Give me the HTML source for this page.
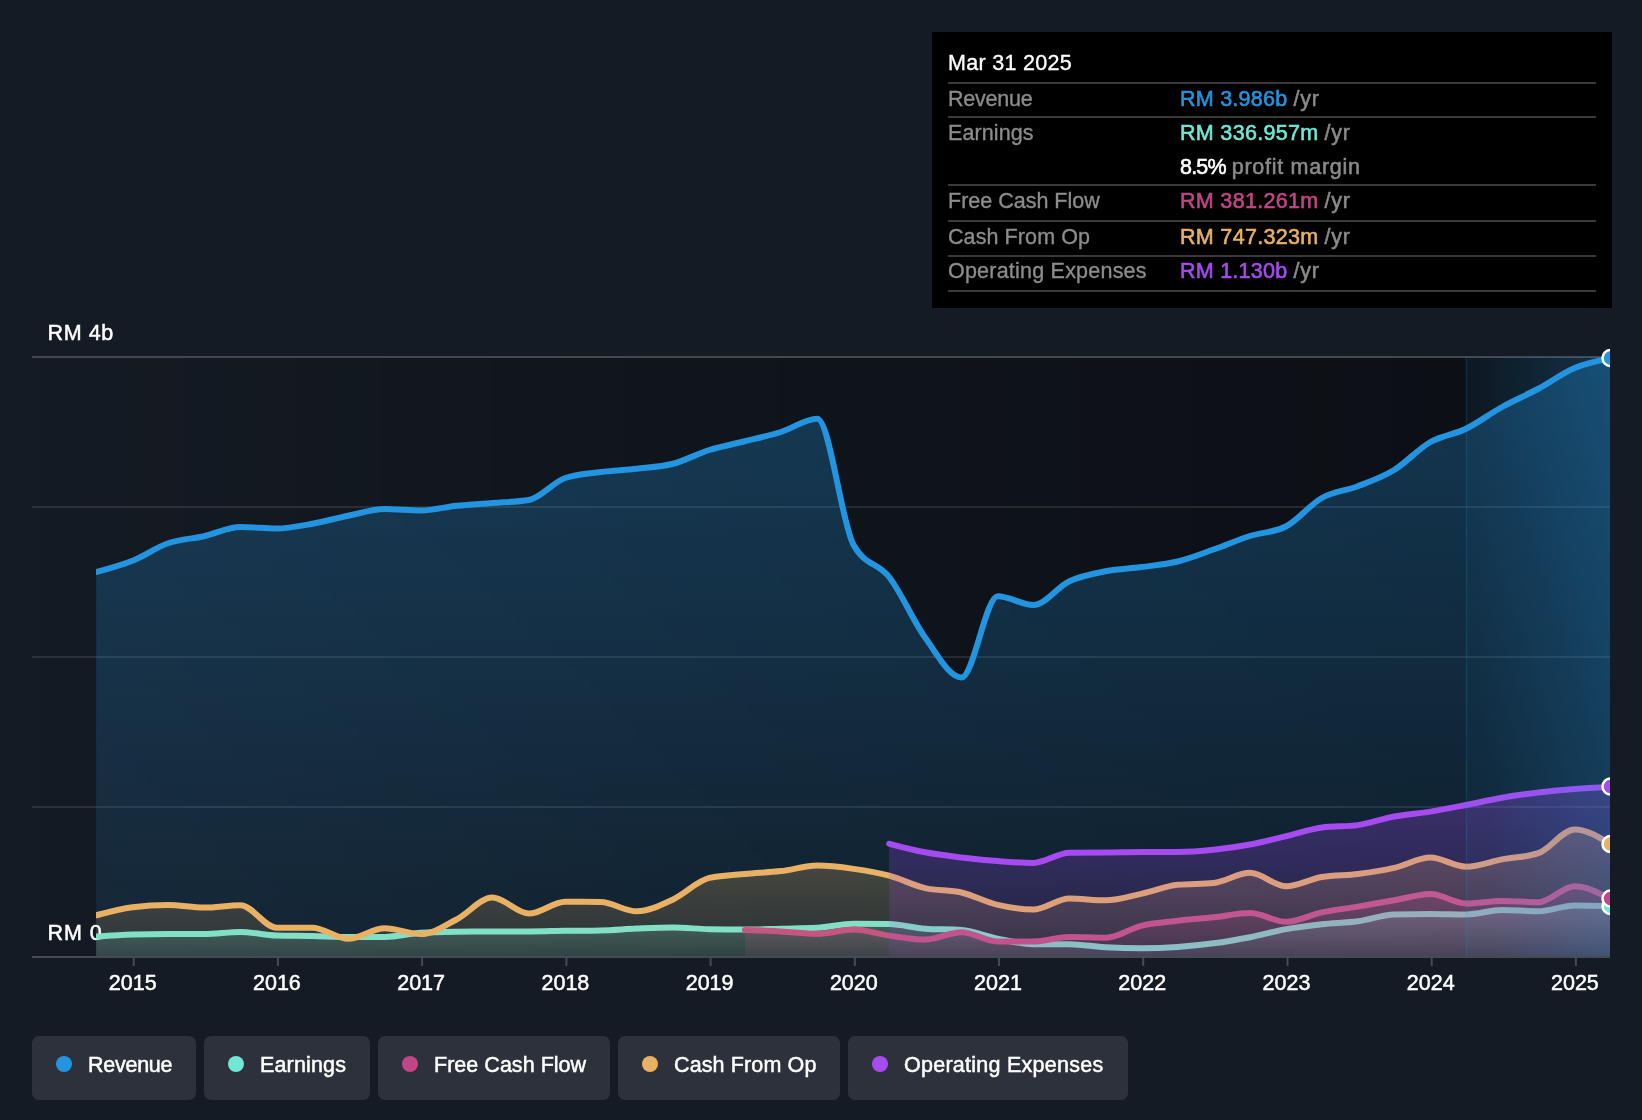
<!DOCTYPE html>
<html lang="en">
<head>
<meta charset="utf-8">
<title>Earnings and Revenue History</title>
<style>
  html, body { margin: 0; padding: 0; }
  body {
    width: 1642px; height: 1120px; overflow: hidden; position: relative;
    background: #151b24;
    font-family: "Liberation Sans", sans-serif;
    font-size: 21.5px; color: #fff;
  }
  svg#chart { position: absolute; left: 0; top: 0; will-change: transform; }
  svg text { font-family: "Liberation Sans", sans-serif; font-size: 21.5px; fill: #fff; }

  /* ---------- tooltip ---------- */
  #tooltip {
    position: absolute; left: 932px; top: 32px; width: 680px; height: 276px;
    background: #000; box-sizing: border-box;
  }
  #tooltip .t { position: absolute; white-space: pre; line-height: 24px; height: 24px; will-change: transform; }
  #tooltip .lbl { left: 16px; color: #8c8c8c; -webkit-text-stroke: 0.35px currentColor; }
  #tooltip .val { left: 247.6px; font-weight: 400; -webkit-text-stroke: 0.6px currentColor; }
  #tooltip .val .u { color: #8a8a8a; -webkit-text-stroke: 0.55px #8a8a8a; }
  #tooltip .sep { position: absolute; left: 16px; width: 648px; height: 2px; background: #3a3a3a; }

  /* ---------- legend ---------- */
  #legend { position: absolute; left: 0; top: 1036px; height: 64px; }
  .lg {
    position: absolute; top: 0; height: 64px; background: #2c313b; border-radius: 7px;
  }
  .lg i { position: absolute; left: 24px; top: 20px; width: 16px; height: 16px; border-radius: 50%; }
  .lg b { will-change: transform; position: absolute; left: 55.8px; top: 17px; line-height: 24px; font-weight: 400; white-space: pre; -webkit-text-stroke: 0.5px #fff; }
</style>
</head>
<body>

<svg id="chart" width="1642" height="1120" viewBox="0 0 1642 1120">
  <defs>
    <clipPath id="zeroclip"><rect x="96" y="890" width="5" height="66"/></clipPath>
    <clipPath id="plotclip"><rect x="96" y="300" width="1514" height="700"/></clipPath>
    <linearGradient id="gDark" x1="0" x2="1" y1="0" y2="0">
      <stop offset="0" stop-color="#000" stop-opacity="0"/>
      <stop offset="0.5" stop-color="#000" stop-opacity="0.23"/>
      <stop offset="1" stop-color="#000" stop-opacity="0.40"/>
    </linearGradient>
    <linearGradient id="gHi" x1="0" x2="1" y1="0.25" y2="0">
      <stop offset="0" stop-color="#2394df" stop-opacity="0.05"/>
      <stop offset="1" stop-color="#2394df" stop-opacity="0.26"/>
    </linearGradient>
    <linearGradient id="gRev" x1="0" x2="0" y1="0" y2="1">
      <stop offset="0" stop-color="#2394df" stop-opacity="0.30"/>
      <stop offset="1" stop-color="#2394df" stop-opacity="0.10"/>
    </linearGradient>
    <linearGradient id="gEarn" x1="0" x2="0" y1="0" y2="1">
      <stop offset="0" stop-color="#71e7d6" stop-opacity="0.30"/>
      <stop offset="1" stop-color="#71e7d6" stop-opacity="0.10"/>
    </linearGradient>
    <linearGradient id="gFcf" x1="0" x2="0" y1="0" y2="1">
      <stop offset="0" stop-color="#c04687" stop-opacity="0.30"/>
      <stop offset="1" stop-color="#c04687" stop-opacity="0.10"/>
    </linearGradient>
    <linearGradient id="gCash" x1="0" x2="0" y1="0" y2="1">
      <stop offset="0" stop-color="#e8b163" stop-opacity="0.30"/>
      <stop offset="1" stop-color="#e8b163" stop-opacity="0.10"/>
    </linearGradient>
    <linearGradient id="gOpex" x1="0" x2="0" y1="0" y2="1">
      <stop offset="0" stop-color="#a64bf0" stop-opacity="0.30"/>
      <stop offset="1" stop-color="#a64bf0" stop-opacity="0.10"/>
    </linearGradient>
  </defs>

  <!-- plot background (darkening to the right) -->
  <rect x="32" y="358" width="1434.5" height="598" fill="url(#gDark)"/>
  <rect x="1466.5" y="358" width="143.5" height="598" fill="#000" fill-opacity="0.40"/>

  <!-- gridlines -->
  <g fill="#ffffff" fill-opacity="0.10">
    <rect x="32" y="506" width="1578" height="2"/>
    <rect x="32" y="656" width="1578" height="2"/>
    <rect x="32" y="806" width="1578" height="2"/>
  </g>
  <rect x="32" y="356" width="1578" height="2" fill="#ffffff" fill-opacity="0.20"/>

  <g clip-path="url(#plotclip)" fill="none" stroke-width="6" stroke-linecap="round" stroke-linejoin="round">
    <!-- Revenue -->
    <path d="M96.15,572.00C108.27,568.81,120.39,565.62,132.50,560.75C144.36,555.99,156.21,547.33,168.07,543.25C180.05,539.12,192.04,538.94,204.02,536.25C216.14,533.53,228.26,527.00,240.37,527.00C252.49,527.00,264.61,528.50,276.72,528.50C288.58,528.50,300.43,525.86,312.29,523.75C324.27,521.62,336.26,518.20,348.24,515.75C360.36,513.28,372.48,509.00,384.59,509.00C396.71,509.00,408.83,510.50,420.94,510.50C432.80,510.50,444.65,507.00,456.51,505.75C468.49,504.49,480.48,503.95,492.46,503.00C504.58,502.04,516.70,502.00,528.81,500.00C540.93,498.00,553.05,482.09,565.16,478.00C577.02,474.00,588.87,473.54,600.73,472.00C612.71,470.44,624.70,470.11,636.68,468.75C648.80,467.37,660.92,466.88,673.03,463.75C685.15,460.62,697.27,453.77,709.38,450.00C721.24,446.31,733.09,444.23,744.95,441.25C756.93,438.23,768.92,435.72,780.90,432.00C793.02,428.24,805.14,418.75,817.25,418.75C829.37,418.75,841.49,523.19,853.60,545.00C865.46,566.33,877.31,561.72,889.17,577.00C901.15,592.45,913.14,620.80,925.12,637.50C937.24,654.38,949.36,677.50,961.47,677.50C973.59,677.50,985.71,596.25,997.82,596.25C1009.68,596.25,1021.53,605.00,1033.39,605.00C1045.37,605.00,1057.36,586.87,1069.34,581.25C1081.46,575.57,1093.58,573.62,1105.69,571.25C1117.81,568.88,1129.93,568.65,1142.04,567.00C1153.90,565.39,1165.75,564.39,1177.61,561.50C1189.59,558.58,1201.58,553.72,1213.56,549.50C1225.68,545.23,1237.80,539.88,1249.91,536.00C1262.03,532.12,1274.15,532.72,1286.26,526.25C1298.12,519.92,1309.97,504.66,1321.83,498.00C1333.81,491.27,1345.80,490.88,1357.78,486.25C1369.90,481.57,1382.02,477.38,1394.13,470.00C1406.25,462.62,1418.37,448.90,1430.48,442.00C1442.34,435.25,1454.19,434.54,1466.05,428.75C1478.03,422.90,1490.02,413.64,1502.00,407.00C1514.12,400.29,1526.24,395.25,1538.35,388.75C1550.47,382.25,1562.59,373.06,1574.70,368.00C1586.56,363.05,1598.41,360.78,1610.27,358.50L1610.27,957.00 L96.15,957.00 Z" fill="url(#gRev)" stroke="none"/>
    <path d="M96.15,572.00C108.27,568.81,120.39,565.62,132.50,560.75C144.36,555.99,156.21,547.33,168.07,543.25C180.05,539.12,192.04,538.94,204.02,536.25C216.14,533.53,228.26,527.00,240.37,527.00C252.49,527.00,264.61,528.50,276.72,528.50C288.58,528.50,300.43,525.86,312.29,523.75C324.27,521.62,336.26,518.20,348.24,515.75C360.36,513.28,372.48,509.00,384.59,509.00C396.71,509.00,408.83,510.50,420.94,510.50C432.80,510.50,444.65,507.00,456.51,505.75C468.49,504.49,480.48,503.95,492.46,503.00C504.58,502.04,516.70,502.00,528.81,500.00C540.93,498.00,553.05,482.09,565.16,478.00C577.02,474.00,588.87,473.54,600.73,472.00C612.71,470.44,624.70,470.11,636.68,468.75C648.80,467.37,660.92,466.88,673.03,463.75C685.15,460.62,697.27,453.77,709.38,450.00C721.24,446.31,733.09,444.23,744.95,441.25C756.93,438.23,768.92,435.72,780.90,432.00C793.02,428.24,805.14,418.75,817.25,418.75C829.37,418.75,841.49,523.19,853.60,545.00C865.46,566.33,877.31,561.72,889.17,577.00C901.15,592.45,913.14,620.80,925.12,637.50C937.24,654.38,949.36,677.50,961.47,677.50C973.59,677.50,985.71,596.25,997.82,596.25C1009.68,596.25,1021.53,605.00,1033.39,605.00C1045.37,605.00,1057.36,586.87,1069.34,581.25C1081.46,575.57,1093.58,573.62,1105.69,571.25C1117.81,568.88,1129.93,568.65,1142.04,567.00C1153.90,565.39,1165.75,564.39,1177.61,561.50C1189.59,558.58,1201.58,553.72,1213.56,549.50C1225.68,545.23,1237.80,539.88,1249.91,536.00C1262.03,532.12,1274.15,532.72,1286.26,526.25C1298.12,519.92,1309.97,504.66,1321.83,498.00C1333.81,491.27,1345.80,490.88,1357.78,486.25C1369.90,481.57,1382.02,477.38,1394.13,470.00C1406.25,462.62,1418.37,448.90,1430.48,442.00C1442.34,435.25,1454.19,434.54,1466.05,428.75C1478.03,422.90,1490.02,413.64,1502.00,407.00C1514.12,400.29,1526.24,395.25,1538.35,388.75C1550.47,382.25,1562.59,373.06,1574.70,368.00C1586.56,363.05,1598.41,360.78,1610.27,358.50" stroke="#2394df"/>
    <!-- Earnings -->
    <path d="M96.15,936.80C108.27,935.87,120.39,934.94,132.50,934.60C144.36,934.27,156.21,934.10,168.07,934.10C180.05,934.10,192.04,934.10,204.02,934.10C216.14,934.10,228.26,931.90,240.37,931.90C252.49,931.90,264.61,935.16,276.72,935.50C288.58,935.83,300.43,935.75,312.29,936.00C324.27,936.25,336.26,937.00,348.24,937.00C360.36,937.00,372.48,937.00,384.59,937.00C396.71,937.00,408.83,933.55,420.94,932.80C432.80,932.07,444.65,931.90,456.51,931.70C468.49,931.50,480.48,931.40,492.46,931.40C504.58,931.40,516.70,931.40,528.81,931.40C540.93,931.40,553.05,930.97,565.16,930.80C577.02,930.64,588.87,930.67,600.73,930.40C612.71,930.13,624.70,929.08,636.68,928.60C648.80,928.11,660.92,927.50,673.03,927.50C685.15,927.50,697.27,928.93,709.38,929.20C721.24,929.47,733.09,929.60,744.95,929.60C756.93,929.60,768.92,929.00,780.90,928.70C793.02,928.40,805.14,928.40,817.25,927.80C829.37,927.20,841.49,923.70,853.60,923.70C865.46,923.70,877.31,923.83,889.17,924.10C901.15,924.37,913.14,927.84,925.12,928.70C937.24,929.57,949.36,929.13,961.47,930.00C973.59,930.87,985.71,936.32,997.82,938.70C1009.68,941.03,1021.53,944.20,1033.39,944.20C1045.37,944.20,1057.36,944.20,1069.34,944.20C1081.46,944.20,1093.58,946.70,1105.69,947.30C1117.81,947.90,1129.93,948.20,1142.04,948.20C1153.90,948.20,1165.75,947.71,1177.61,946.90C1189.59,946.08,1201.58,944.90,1213.56,943.30C1225.68,941.68,1237.80,939.57,1249.91,937.20C1262.03,934.83,1274.15,931.28,1286.26,929.10C1298.12,926.97,1309.97,925.50,1321.83,924.20C1333.81,922.89,1345.80,922.92,1357.78,921.30C1369.90,919.66,1382.02,914.73,1394.13,914.40C1406.25,914.07,1418.37,913.90,1430.48,913.90C1442.34,913.90,1454.19,914.40,1466.05,914.40C1478.03,914.40,1490.02,910.00,1502.00,910.00C1514.12,910.00,1526.24,911.20,1538.35,911.20C1550.47,911.20,1562.59,905.40,1574.70,905.40C1586.56,905.40,1598.41,905.70,1610.27,906.00L1610.27,957.00 L96.15,957.00 Z" fill="url(#gEarn)" stroke="none"/>
    <path d="M96.15,936.80C108.27,935.87,120.39,934.94,132.50,934.60C144.36,934.27,156.21,934.10,168.07,934.10C180.05,934.10,192.04,934.10,204.02,934.10C216.14,934.10,228.26,931.90,240.37,931.90C252.49,931.90,264.61,935.16,276.72,935.50C288.58,935.83,300.43,935.75,312.29,936.00C324.27,936.25,336.26,937.00,348.24,937.00C360.36,937.00,372.48,937.00,384.59,937.00C396.71,937.00,408.83,933.55,420.94,932.80C432.80,932.07,444.65,931.90,456.51,931.70C468.49,931.50,480.48,931.40,492.46,931.40C504.58,931.40,516.70,931.40,528.81,931.40C540.93,931.40,553.05,930.97,565.16,930.80C577.02,930.64,588.87,930.67,600.73,930.40C612.71,930.13,624.70,929.08,636.68,928.60C648.80,928.11,660.92,927.50,673.03,927.50C685.15,927.50,697.27,928.93,709.38,929.20C721.24,929.47,733.09,929.60,744.95,929.60C756.93,929.60,768.92,929.00,780.90,928.70C793.02,928.40,805.14,928.40,817.25,927.80C829.37,927.20,841.49,923.70,853.60,923.70C865.46,923.70,877.31,923.83,889.17,924.10C901.15,924.37,913.14,927.84,925.12,928.70C937.24,929.57,949.36,929.13,961.47,930.00C973.59,930.87,985.71,936.32,997.82,938.70C1009.68,941.03,1021.53,944.20,1033.39,944.20C1045.37,944.20,1057.36,944.20,1069.34,944.20C1081.46,944.20,1093.58,946.70,1105.69,947.30C1117.81,947.90,1129.93,948.20,1142.04,948.20C1153.90,948.20,1165.75,947.71,1177.61,946.90C1189.59,946.08,1201.58,944.90,1213.56,943.30C1225.68,941.68,1237.80,939.57,1249.91,937.20C1262.03,934.83,1274.15,931.28,1286.26,929.10C1298.12,926.97,1309.97,925.50,1321.83,924.20C1333.81,922.89,1345.80,922.92,1357.78,921.30C1369.90,919.66,1382.02,914.73,1394.13,914.40C1406.25,914.07,1418.37,913.90,1430.48,913.90C1442.34,913.90,1454.19,914.40,1466.05,914.40C1478.03,914.40,1490.02,910.00,1502.00,910.00C1514.12,910.00,1526.24,911.20,1538.35,911.20C1550.47,911.20,1562.59,905.40,1574.70,905.40C1586.56,905.40,1598.41,905.70,1610.27,906.00" stroke="#71e7d6"/>
    <!-- Free cash flow -->
    <path d="M744.95,929.90C756.93,930.33,768.92,930.76,780.90,931.40C793.02,932.05,805.14,933.80,817.25,933.80C829.37,933.80,841.49,929.60,853.60,929.60C865.46,929.60,877.31,933.94,889.17,935.60C901.15,937.28,913.14,939.60,925.12,939.60C937.24,939.60,949.36,932.30,961.47,932.30C973.59,932.30,985.71,941.50,997.82,941.50C1009.68,941.50,1021.53,941.50,1033.39,941.50C1045.37,941.50,1057.36,936.90,1069.34,936.90C1081.46,936.90,1093.58,937.80,1105.69,937.80C1117.81,937.80,1129.93,928.44,1142.04,925.60C1153.90,922.82,1165.75,922.18,1177.61,920.80C1189.59,919.41,1201.58,918.59,1213.56,917.30C1225.68,915.99,1237.80,913.00,1249.91,913.00C1262.03,913.00,1274.15,921.80,1286.26,921.80C1298.12,921.80,1309.97,914.93,1321.83,912.40C1333.81,909.85,1345.80,908.60,1357.78,906.60C1369.90,904.57,1382.02,902.40,1394.13,900.30C1406.25,898.20,1418.37,894.00,1430.48,894.00C1442.34,894.00,1454.19,903.40,1466.05,903.40C1478.03,903.40,1490.02,901.00,1502.00,901.00C1514.12,901.00,1526.24,902.20,1538.35,902.20C1550.47,902.20,1562.59,886.30,1574.70,886.30C1586.56,886.30,1598.41,892.65,1610.27,899.00L1610.27,957.00 L744.95,957.00 Z" fill="url(#gFcf)" stroke="none"/>
    <path d="M744.95,929.90C756.93,930.33,768.92,930.76,780.90,931.40C793.02,932.05,805.14,933.80,817.25,933.80C829.37,933.80,841.49,929.60,853.60,929.60C865.46,929.60,877.31,933.94,889.17,935.60C901.15,937.28,913.14,939.60,925.12,939.60C937.24,939.60,949.36,932.30,961.47,932.30C973.59,932.30,985.71,941.50,997.82,941.50C1009.68,941.50,1021.53,941.50,1033.39,941.50C1045.37,941.50,1057.36,936.90,1069.34,936.90C1081.46,936.90,1093.58,937.80,1105.69,937.80C1117.81,937.80,1129.93,928.44,1142.04,925.60C1153.90,922.82,1165.75,922.18,1177.61,920.80C1189.59,919.41,1201.58,918.59,1213.56,917.30C1225.68,915.99,1237.80,913.00,1249.91,913.00C1262.03,913.00,1274.15,921.80,1286.26,921.80C1298.12,921.80,1309.97,914.93,1321.83,912.40C1333.81,909.85,1345.80,908.60,1357.78,906.60C1369.90,904.57,1382.02,902.40,1394.13,900.30C1406.25,898.20,1418.37,894.00,1430.48,894.00C1442.34,894.00,1454.19,903.40,1466.05,903.40C1478.03,903.40,1490.02,901.00,1502.00,901.00C1514.12,901.00,1526.24,902.20,1538.35,902.20C1550.47,902.20,1562.59,886.30,1574.70,886.30C1586.56,886.30,1598.41,892.65,1610.27,899.00" stroke="#c04687"/>
    <!-- Cash from op -->
    <path d="M96.15,915.30C108.27,912.03,120.39,908.77,132.50,907.20C144.36,905.67,156.21,904.90,168.07,904.90C180.05,904.90,192.04,907.60,204.02,907.60C216.14,907.60,228.26,905.20,240.37,905.20C252.49,905.20,264.61,927.70,276.72,927.70C288.58,927.70,300.43,927.70,312.29,927.70C324.27,927.70,336.26,938.70,348.24,938.70C360.36,938.70,372.48,928.20,384.59,928.20C396.71,928.20,408.83,934.10,420.94,934.10C432.80,934.10,444.65,925.54,456.51,919.50C468.49,913.40,480.48,897.60,492.46,897.60C504.58,897.60,516.70,913.60,528.81,913.60C540.93,913.60,553.05,901.80,565.16,901.80C577.02,901.80,588.87,901.90,600.73,902.10C612.71,902.30,624.70,911.30,636.68,911.30C648.80,911.30,660.92,904.97,673.03,899.40C685.15,893.83,697.27,880.63,709.38,877.90C721.24,875.23,733.09,875.03,744.95,873.90C756.93,872.76,768.92,872.47,780.90,871.10C793.02,869.71,805.14,865.60,817.25,865.60C829.37,865.60,841.49,867.18,853.60,868.90C865.46,870.58,877.31,872.53,889.17,875.70C901.15,878.91,913.14,885.30,925.12,888.10C937.24,890.93,949.36,889.70,961.47,892.50C973.59,895.30,985.71,902.06,997.82,904.90C1009.68,907.67,1021.53,909.50,1033.39,909.50C1045.37,909.50,1057.36,898.50,1069.34,898.50C1081.46,898.50,1093.58,900.30,1105.69,900.30C1117.81,900.30,1129.93,896.22,1142.04,893.60C1153.90,891.04,1165.75,885.99,1177.61,884.80C1189.59,883.60,1201.58,884.20,1213.56,883.00C1225.68,881.79,1237.80,872.80,1249.91,872.80C1262.03,872.80,1274.15,886.30,1286.26,886.30C1298.12,886.30,1309.97,878.98,1321.83,877.00C1333.81,875.00,1345.80,875.50,1357.78,874.00C1369.90,872.48,1382.02,870.63,1394.13,867.90C1406.25,865.17,1418.37,857.60,1430.48,857.60C1442.34,857.60,1454.19,866.70,1466.05,866.70C1478.03,866.70,1490.02,861.64,1502.00,859.40C1514.12,857.14,1526.24,857.33,1538.35,853.20C1550.47,849.07,1562.59,829.50,1574.70,829.50C1586.56,829.50,1598.41,836.75,1610.27,844.00L1610.27,957.00 L96.15,957.00 Z" fill="url(#gCash)" stroke="none"/>
    <path d="M96.15,915.30C108.27,912.03,120.39,908.77,132.50,907.20C144.36,905.67,156.21,904.90,168.07,904.90C180.05,904.90,192.04,907.60,204.02,907.60C216.14,907.60,228.26,905.20,240.37,905.20C252.49,905.20,264.61,927.70,276.72,927.70C288.58,927.70,300.43,927.70,312.29,927.70C324.27,927.70,336.26,938.70,348.24,938.70C360.36,938.70,372.48,928.20,384.59,928.20C396.71,928.20,408.83,934.10,420.94,934.10C432.80,934.10,444.65,925.54,456.51,919.50C468.49,913.40,480.48,897.60,492.46,897.60C504.58,897.60,516.70,913.60,528.81,913.60C540.93,913.60,553.05,901.80,565.16,901.80C577.02,901.80,588.87,901.90,600.73,902.10C612.71,902.30,624.70,911.30,636.68,911.30C648.80,911.30,660.92,904.97,673.03,899.40C685.15,893.83,697.27,880.63,709.38,877.90C721.24,875.23,733.09,875.03,744.95,873.90C756.93,872.76,768.92,872.47,780.90,871.10C793.02,869.71,805.14,865.60,817.25,865.60C829.37,865.60,841.49,867.18,853.60,868.90C865.46,870.58,877.31,872.53,889.17,875.70C901.15,878.91,913.14,885.30,925.12,888.10C937.24,890.93,949.36,889.70,961.47,892.50C973.59,895.30,985.71,902.06,997.82,904.90C1009.68,907.67,1021.53,909.50,1033.39,909.50C1045.37,909.50,1057.36,898.50,1069.34,898.50C1081.46,898.50,1093.58,900.30,1105.69,900.30C1117.81,900.30,1129.93,896.22,1142.04,893.60C1153.90,891.04,1165.75,885.99,1177.61,884.80C1189.59,883.60,1201.58,884.20,1213.56,883.00C1225.68,881.79,1237.80,872.80,1249.91,872.80C1262.03,872.80,1274.15,886.30,1286.26,886.30C1298.12,886.30,1309.97,878.98,1321.83,877.00C1333.81,875.00,1345.80,875.50,1357.78,874.00C1369.90,872.48,1382.02,870.63,1394.13,867.90C1406.25,865.17,1418.37,857.60,1430.48,857.60C1442.34,857.60,1454.19,866.70,1466.05,866.70C1478.03,866.70,1490.02,861.64,1502.00,859.40C1514.12,857.14,1526.24,857.33,1538.35,853.20C1550.47,849.07,1562.59,829.50,1574.70,829.50C1586.56,829.50,1598.41,836.75,1610.27,844.00" stroke="#e8b163"/>
    <!-- Opex -->
    <path d="M889.17,843.70C901.15,846.85,913.14,850.01,925.12,852.30C937.24,854.62,949.36,856.03,961.47,857.50C973.59,858.97,985.71,860.20,997.82,861.10C1009.68,861.98,1021.53,862.90,1033.39,862.90C1045.37,862.90,1057.36,853.00,1069.34,852.80C1081.46,852.60,1093.58,852.65,1105.69,852.50C1117.81,852.35,1129.93,851.90,1142.04,851.90C1153.90,851.90,1165.75,851.90,1177.61,851.90C1189.59,851.90,1201.58,850.92,1213.56,849.70C1225.68,848.47,1237.80,846.77,1249.91,844.50C1262.03,842.23,1274.15,838.97,1286.26,836.10C1298.12,833.30,1309.97,829.08,1321.83,827.50C1333.81,825.90,1345.80,826.70,1357.78,825.10C1369.90,823.48,1382.02,818.75,1394.13,816.50C1406.25,814.25,1418.37,813.54,1430.48,811.60C1442.34,809.70,1454.19,807.30,1466.05,805.00C1478.03,802.67,1490.02,799.78,1502.00,797.70C1514.12,795.60,1526.24,793.97,1538.35,792.50C1550.47,791.03,1562.59,789.82,1574.70,788.90C1586.56,788.00,1598.41,787.50,1610.27,787.00L1610.27,957.00 L889.17,957.00 Z" fill="url(#gOpex)" stroke="none"/>
    <path d="M889.17,843.70C901.15,846.85,913.14,850.01,925.12,852.30C937.24,854.62,949.36,856.03,961.47,857.50C973.59,858.97,985.71,860.20,997.82,861.10C1009.68,861.98,1021.53,862.90,1033.39,862.90C1045.37,862.90,1057.36,853.00,1069.34,852.80C1081.46,852.60,1093.58,852.65,1105.69,852.50C1117.81,852.35,1129.93,851.90,1142.04,851.90C1153.90,851.90,1165.75,851.90,1177.61,851.90C1189.59,851.90,1201.58,850.92,1213.56,849.70C1225.68,848.47,1237.80,846.77,1249.91,844.50C1262.03,842.23,1274.15,838.97,1286.26,836.10C1298.12,833.30,1309.97,829.08,1321.83,827.50C1333.81,825.90,1345.80,826.70,1357.78,825.10C1369.90,823.48,1382.02,818.75,1394.13,816.50C1406.25,814.25,1418.37,813.54,1430.48,811.60C1442.34,809.70,1454.19,807.30,1466.05,805.00C1478.03,802.67,1490.02,799.78,1502.00,797.70C1514.12,795.60,1526.24,793.97,1538.35,792.50C1550.47,791.03,1562.59,789.82,1574.70,788.90C1586.56,788.00,1598.41,787.50,1610.27,787.00" stroke="#a64bf0"/>

    <!-- highlighted last period -->
    <rect x="1466.5" y="357" width="143.5" height="600" fill="url(#gHi)" stroke="none"/>
    <line x1="1466.5" x2="1466.5" y1="357" y2="957" stroke="#2394df" stroke-opacity="0.18" stroke-width="1.5"/>

    <!-- end markers -->
    <g stroke="#fff" stroke-width="2.5">
      <circle cx="1610.5" cy="906" r="8" fill="#71e7d6"/>
      <circle cx="1610.5" cy="898.5" r="8" fill="#c04687"/>
      <circle cx="1610.5" cy="844" r="8" fill="#e8b163"/>
      <circle cx="1610.5" cy="786.5" r="8" fill="#a64bf0"/>
      <circle cx="1610.5" cy="358" r="8" fill="#2394df"/>
    </g>
  </g>

  <!-- y labels (drawn above fills, but the series lines pass over the "0") -->
  <g stroke="#fff" stroke-width="0.5">
    <text x="47.6" y="340" letter-spacing="0.55">RM 4b</text>
    <text x="47.6" y="940" letter-spacing="0.9">RM 0</text>
  </g>
  <g clip-path="url(#zeroclip)" fill="none" stroke-width="6">
    <path d="M96.15,936.80C108.27,935.87,120.39,934.94,132.50,934.60C144.36,934.27,156.21,934.10,168.07,934.10C180.05,934.10,192.04,934.10,204.02,934.10C216.14,934.10,228.26,931.90,240.37,931.90C252.49,931.90,264.61,935.16,276.72,935.50C288.58,935.83,300.43,935.75,312.29,936.00C324.27,936.25,336.26,937.00,348.24,937.00C360.36,937.00,372.48,937.00,384.59,937.00C396.71,937.00,408.83,933.55,420.94,932.80C432.80,932.07,444.65,931.90,456.51,931.70C468.49,931.50,480.48,931.40,492.46,931.40C504.58,931.40,516.70,931.40,528.81,931.40C540.93,931.40,553.05,930.97,565.16,930.80C577.02,930.64,588.87,930.67,600.73,930.40C612.71,930.13,624.70,929.08,636.68,928.60C648.80,928.11,660.92,927.50,673.03,927.50C685.15,927.50,697.27,928.93,709.38,929.20C721.24,929.47,733.09,929.60,744.95,929.60C756.93,929.60,768.92,929.00,780.90,928.70C793.02,928.40,805.14,928.40,817.25,927.80C829.37,927.20,841.49,923.70,853.60,923.70C865.46,923.70,877.31,923.83,889.17,924.10C901.15,924.37,913.14,927.84,925.12,928.70C937.24,929.57,949.36,929.13,961.47,930.00C973.59,930.87,985.71,936.32,997.82,938.70C1009.68,941.03,1021.53,944.20,1033.39,944.20C1045.37,944.20,1057.36,944.20,1069.34,944.20C1081.46,944.20,1093.58,946.70,1105.69,947.30C1117.81,947.90,1129.93,948.20,1142.04,948.20C1153.90,948.20,1165.75,947.71,1177.61,946.90C1189.59,946.08,1201.58,944.90,1213.56,943.30C1225.68,941.68,1237.80,939.57,1249.91,937.20C1262.03,934.83,1274.15,931.28,1286.26,929.10C1298.12,926.97,1309.97,925.50,1321.83,924.20C1333.81,922.89,1345.80,922.92,1357.78,921.30C1369.90,919.66,1382.02,914.73,1394.13,914.40C1406.25,914.07,1418.37,913.90,1430.48,913.90C1442.34,913.90,1454.19,914.40,1466.05,914.40C1478.03,914.40,1490.02,910.00,1502.00,910.00C1514.12,910.00,1526.24,911.20,1538.35,911.20C1550.47,911.20,1562.59,905.40,1574.70,905.40C1586.56,905.40,1598.41,905.70,1610.27,906.00" stroke="#80e0c7"/>
    <path d="M96.15,915.30C108.27,912.03,120.39,908.77,132.50,907.20C144.36,905.67,156.21,904.90,168.07,904.90C180.05,904.90,192.04,907.60,204.02,907.60C216.14,907.60,228.26,905.20,240.37,905.20C252.49,905.20,264.61,927.70,276.72,927.70C288.58,927.70,300.43,927.70,312.29,927.70C324.27,927.70,336.26,938.70,348.24,938.70C360.36,938.70,372.48,928.20,384.59,928.20C396.71,928.20,408.83,934.10,420.94,934.10C432.80,934.10,444.65,925.54,456.51,919.50C468.49,913.40,480.48,897.60,492.46,897.60C504.58,897.60,516.70,913.60,528.81,913.60C540.93,913.60,553.05,901.80,565.16,901.80C577.02,901.80,588.87,901.90,600.73,902.10C612.71,902.30,624.70,911.30,636.68,911.30C648.80,911.30,660.92,904.97,673.03,899.40C685.15,893.83,697.27,880.63,709.38,877.90C721.24,875.23,733.09,875.03,744.95,873.90C756.93,872.76,768.92,872.47,780.90,871.10C793.02,869.71,805.14,865.60,817.25,865.60C829.37,865.60,841.49,867.18,853.60,868.90C865.46,870.58,877.31,872.53,889.17,875.70C901.15,878.91,913.14,885.30,925.12,888.10C937.24,890.93,949.36,889.70,961.47,892.50C973.59,895.30,985.71,902.06,997.82,904.90C1009.68,907.67,1021.53,909.50,1033.39,909.50C1045.37,909.50,1057.36,898.50,1069.34,898.50C1081.46,898.50,1093.58,900.30,1105.69,900.30C1117.81,900.30,1129.93,896.22,1142.04,893.60C1153.90,891.04,1165.75,885.99,1177.61,884.80C1189.59,883.60,1201.58,884.20,1213.56,883.00C1225.68,881.79,1237.80,872.80,1249.91,872.80C1262.03,872.80,1274.15,886.30,1286.26,886.30C1298.12,886.30,1309.97,878.98,1321.83,877.00C1333.81,875.00,1345.80,875.50,1357.78,874.00C1369.90,872.48,1382.02,870.63,1394.13,867.90C1406.25,865.17,1418.37,857.60,1430.48,857.60C1442.34,857.60,1454.19,866.70,1466.05,866.70C1478.03,866.70,1490.02,861.64,1502.00,859.40C1514.12,857.14,1526.24,857.33,1538.35,853.20C1550.47,849.07,1562.59,829.50,1574.70,829.50C1586.56,829.50,1598.41,836.75,1610.27,844.00" stroke="#e8b163"/>
  </g>

  <!-- x axis -->
  <rect x="32" y="956" width="1578" height="2" fill="#464b52"/>
  <g fill="#464b52">
    <rect x="132.7" y="958" width="2" height="8"/>
    <rect x="276.9" y="958" width="2" height="8"/>
    <rect x="421.1" y="958" width="2" height="8"/>
    <rect x="565.4" y="958" width="2" height="8"/>
    <rect x="709.6" y="958" width="2" height="8"/>
    <rect x="853.8" y="958" width="2" height="8"/>
    <rect x="998.0" y="958" width="2" height="8"/>
    <rect x="1142.2" y="958" width="2" height="8"/>
    <rect x="1286.5" y="958" width="2" height="8"/>
    <rect x="1430.7" y="958" width="2" height="8"/>
    <rect x="1574.9" y="958" width="2" height="8"/>
  </g>
  <g text-anchor="middle" stroke="#fff" stroke-width="0.5">
    <text x="132.7" y="990">2015</text>
    <text x="276.9" y="990">2016</text>
    <text x="421.1" y="990">2017</text>
    <text x="565.4" y="990">2018</text>
    <text x="709.6" y="990">2019</text>
    <text x="853.8" y="990">2020</text>
    <text x="998.0" y="990">2021</text>
    <text x="1142.2" y="990">2022</text>
    <text x="1286.5" y="990">2023</text>
    <text x="1430.7" y="990">2024</text>
    <text x="1574.9" y="990">2025</text>
  </g>
</svg>

<div id="tooltip">
  <div class="t lbl" style="top:18.6px;letter-spacing:0.30px;color:#fff">Mar 31 2025</div>
  <div class="sep" style="top:50px"></div>
  <div class="t lbl" style="top:54.5px;letter-spacing:-0.23px">Revenue</div>
  <div class="t val" style="top:54.5px;color:#2394df"><span class="v" style="letter-spacing:0.25px">RM 3.986b</span> <span class="u" style="letter-spacing:0.80px">/yr</span></div>
  <div class="sep" style="top:84px"></div>
  <div class="t lbl" style="top:88.5px;letter-spacing:0.09px">Earnings</div>
  <div class="t val" style="top:88.5px;color:#71e7d6"><span class="v" style="letter-spacing:0.32px">RM 336.957m</span> <span class="u" style="letter-spacing:0.80px">/yr</span></div>
  <div class="t val" style="top:122.5px;color:#fff"><span class="v" style="letter-spacing:-0.80px">8.5%</span> <span class="u" style="letter-spacing:0.72px">profit margin</span></div>
  <div class="sep" style="top:152px"></div>
  <div class="t lbl" style="top:156.6px;letter-spacing:0.00px">Free Cash Flow</div>
  <div class="t val" style="top:156.6px;color:#c04687"><span class="v" style="letter-spacing:0.32px">RM 381.261m</span> <span class="u" style="letter-spacing:0.80px">/yr</span></div>
  <div class="sep" style="top:188px"></div>
  <div class="t lbl" style="top:192.6px;letter-spacing:0.09px">Cash From Op</div>
  <div class="t val" style="top:192.6px;color:#e8b163"><span class="v" style="letter-spacing:0.32px">RM 747.323m</span> <span class="u" style="letter-spacing:0.80px">/yr</span></div>
  <div class="sep" style="top:222.5px"></div>
  <div class="t lbl" style="top:226.6px;letter-spacing:0.22px">Operating Expenses</div>
  <div class="t val" style="top:226.6px;color:#a64bf0"><span class="v" style="letter-spacing:0.25px">RM 1.130b</span> <span class="u" style="letter-spacing:0.80px">/yr</span></div>
  <div class="sep" style="top:258px"></div>
</div>

<div id="legend">
  <div class="lg" style="left:32px;width:164px"><i style="background:#2394df"></i><b style="letter-spacing:-0.26px">Revenue</b></div>
  <div class="lg" style="left:204px;width:166px"><i style="background:#71e7d6"></i><b style="letter-spacing:0.15px">Earnings</b></div>
  <div class="lg" style="left:378px;width:232px"><i style="background:#c04687"></i><b style="letter-spacing:0.03px">Free Cash Flow</b></div>
  <div class="lg" style="left:618px;width:222px"><i style="background:#e8b163"></i><b style="letter-spacing:0.13px">Cash From Op</b></div>
  <div class="lg" style="left:848px;width:280px"><i style="background:#a64bf0"></i><b style="letter-spacing:0.26px">Operating Expenses</b></div>
</div>

</body>
</html>
